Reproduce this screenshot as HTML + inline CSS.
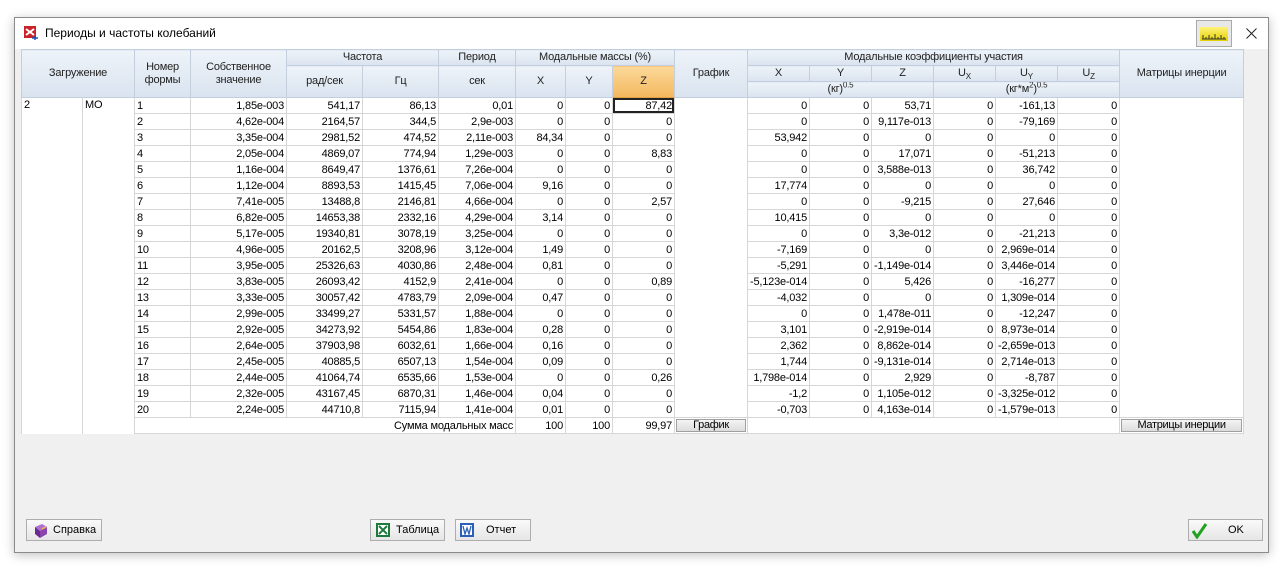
<!DOCTYPE html>
<html><head><meta charset="utf-8"><style>
body{margin:0;width:1287px;height:571px;background:#fff;position:relative;overflow:hidden;font-family:"Liberation Sans",sans-serif;font-size:11px;color:#000}
.win{position:absolute;left:14px;top:17px;width:1253px;height:534px;background:#f0f0f0;border:1px solid #8a8a8a;box-shadow:0 2px 10px rgba(0,0,0,.25)}
.title{position:absolute;left:0;top:0;width:1253px;height:31px;background:#fff}
.title span{position:absolute;left:30px;top:8px;font-size:12px}
table{position:absolute;left:21px;top:49px;width:1222px;border-collapse:collapse;table-layout:fixed;background:#fff}
td,th{padding:0 2px;height:15px;line-height:14px;border:1px solid #d6d6d6;white-space:nowrap;overflow:hidden;text-align:right;font-weight:normal;letter-spacing:-0.2px}
tr{height:16px}
th{background:linear-gradient(#eef3f9,#d9e3ef);border-color:#c3cfdc;text-align:center;color:#222;line-height:13px}
sub,sup{line-height:0;font-size:8px}
th.z{background:linear-gradient(#fbd99a,#f3b85e);border-color:#e0a040}
td.l{text-align:left}
td.n{border-top:none;border-bottom:none}
td.sel{box-shadow:inset 0 0 0 2px #222}
.btn{position:absolute;height:22px;background:linear-gradient(#fafafa,#e6e6e6);border:1px solid #adadad;font-size:11px;line-height:20px;box-sizing:border-box}
.sb{background:linear-gradient(#f4f4f4,#dcdcdc);border:1px solid #a0a0a0;line-height:11px;height:11px;text-align:center;padding:0;letter-spacing:-0.3px}
</style></head><body>
<div class="win">
<div class="title">
<svg style="position:absolute;left:8px;top:7px" width="16" height="16"><rect x="1" y="1" width="12" height="12" fill="#c8222a"/><path d="M3 4l8 6M3 10l8-6" stroke="#fff" stroke-width="2"/><path d="M9 13h6M12 11v4" stroke="#2050b0" stroke-width="1.5"/></svg>
<span>Периоды и частоты колебаний</span>
<div style="position:absolute;left:1181px;top:2px;width:36px;height:27px;background:#e8e8e8;border:1px solid #aaa;box-sizing:border-box"><div style="position:absolute;left:3px;top:6px;width:28px;height:14px;background:linear-gradient(#fff27a,#e2d200)"><svg width="28" height="14"><path d="M2 12h24M3 12v-4M6 12v-2M9 12v-4M12 12v-2M15 12v-5M18 12v-2M21 12v-4M24 12v-2" stroke="#333" stroke-width="1"/></svg></div></div>
<svg style="position:absolute;left:1231px;top:10px" width="11" height="11"><path d="M0.5 0.5l10 10M10.5 0.5l-10 10" stroke="#222"/></svg>
</div>
</div>
<table>
<colgroup><col style="width:61px"><col style="width:52px"><col style="width:56px"><col style="width:96px"><col style="width:76px"><col style="width:76px"><col style="width:77px"><col style="width:50px"><col style="width:47px"><col style="width:62px"><col style="width:73px"><col style="width:62px"><col style="width:62px"><col style="width:62px"><col style="width:62px"><col style="width:62px"><col style="width:62px"><col style="width:124px"></colgroup>
<tr><th colspan="2" rowspan="3">Загружение</th><th rowspan="3">Номер<br>формы</th><th rowspan="3">Собственное<br>значение</th><th colspan="2">Частота</th><th>Период</th><th colspan="3">Модальные массы (%)</th><th rowspan="3">График</th><th colspan="6">Модальные коэффициенты участия</th><th rowspan="3">Матрицы инерции</th></tr>
<tr><th rowspan="2">рад/сек</th><th rowspan="2">Гц</th><th rowspan="2">сек</th><th rowspan="2">X</th><th rowspan="2">Y</th><th rowspan="2" class="z">Z</th><th>X</th><th>Y</th><th>Z</th><th>U<sub>X</sub></th><th>U<sub>Y</sub></th><th>U<sub>Z</sub></th></tr>
<tr><th colspan="3">(кг)<sup>0.5</sup></th><th colspan="3">(кг*м<sup>2</sup>)<sup>0.5</sup></th></tr>
<tr><td class="l n" rowspan="21" style="vertical-align:top">2</td><td class="l n" rowspan="21" style="vertical-align:top">МО</td><td class="l">1</td><td>1,85e-003</td><td>541,17</td><td>86,13</td><td>0,01</td><td>0</td><td>0</td><td class="sel">87,42</td><td class="n" rowspan="20"></td><td>0</td><td>0</td><td>53,71</td><td>0</td><td>-161,13</td><td>0</td><td class="n" rowspan="20"></td></tr>
<tr><td class="l">2</td><td>4,62e-004</td><td>2164,57</td><td>344,5</td><td>2,9e-003</td><td>0</td><td>0</td><td>0</td><td>0</td><td>0</td><td>9,117e-013</td><td>0</td><td>-79,169</td><td>0</td></tr>
<tr><td class="l">3</td><td>3,35e-004</td><td>2981,52</td><td>474,52</td><td>2,11e-003</td><td>84,34</td><td>0</td><td>0</td><td>53,942</td><td>0</td><td>0</td><td>0</td><td>0</td><td>0</td></tr>
<tr><td class="l">4</td><td>2,05e-004</td><td>4869,07</td><td>774,94</td><td>1,29e-003</td><td>0</td><td>0</td><td>8,83</td><td>0</td><td>0</td><td>17,071</td><td>0</td><td>-51,213</td><td>0</td></tr>
<tr><td class="l">5</td><td>1,16e-004</td><td>8649,47</td><td>1376,61</td><td>7,26e-004</td><td>0</td><td>0</td><td>0</td><td>0</td><td>0</td><td>3,588e-013</td><td>0</td><td>36,742</td><td>0</td></tr>
<tr><td class="l">6</td><td>1,12e-004</td><td>8893,53</td><td>1415,45</td><td>7,06e-004</td><td>9,16</td><td>0</td><td>0</td><td>17,774</td><td>0</td><td>0</td><td>0</td><td>0</td><td>0</td></tr>
<tr><td class="l">7</td><td>7,41e-005</td><td>13488,8</td><td>2146,81</td><td>4,66e-004</td><td>0</td><td>0</td><td>2,57</td><td>0</td><td>0</td><td>-9,215</td><td>0</td><td>27,646</td><td>0</td></tr>
<tr><td class="l">8</td><td>6,82e-005</td><td>14653,38</td><td>2332,16</td><td>4,29e-004</td><td>3,14</td><td>0</td><td>0</td><td>10,415</td><td>0</td><td>0</td><td>0</td><td>0</td><td>0</td></tr>
<tr><td class="l">9</td><td>5,17e-005</td><td>19340,81</td><td>3078,19</td><td>3,25e-004</td><td>0</td><td>0</td><td>0</td><td>0</td><td>0</td><td>3,3e-012</td><td>0</td><td>-21,213</td><td>0</td></tr>
<tr><td class="l">10</td><td>4,96e-005</td><td>20162,5</td><td>3208,96</td><td>3,12e-004</td><td>1,49</td><td>0</td><td>0</td><td>-7,169</td><td>0</td><td>0</td><td>0</td><td>2,969e-014</td><td>0</td></tr>
<tr><td class="l">11</td><td>3,95e-005</td><td>25326,63</td><td>4030,86</td><td>2,48e-004</td><td>0,81</td><td>0</td><td>0</td><td>-5,291</td><td>0</td><td>-1,149e-014</td><td>0</td><td>3,446e-014</td><td>0</td></tr>
<tr><td class="l">12</td><td>3,83e-005</td><td>26093,42</td><td>4152,9</td><td>2,41e-004</td><td>0</td><td>0</td><td>0,89</td><td>-5,123e-014</td><td>0</td><td>5,426</td><td>0</td><td>-16,277</td><td>0</td></tr>
<tr><td class="l">13</td><td>3,33e-005</td><td>30057,42</td><td>4783,79</td><td>2,09e-004</td><td>0,47</td><td>0</td><td>0</td><td>-4,032</td><td>0</td><td>0</td><td>0</td><td>1,309e-014</td><td>0</td></tr>
<tr><td class="l">14</td><td>2,99e-005</td><td>33499,27</td><td>5331,57</td><td>1,88e-004</td><td>0</td><td>0</td><td>0</td><td>0</td><td>0</td><td>1,478e-011</td><td>0</td><td>-12,247</td><td>0</td></tr>
<tr><td class="l">15</td><td>2,92e-005</td><td>34273,92</td><td>5454,86</td><td>1,83e-004</td><td>0,28</td><td>0</td><td>0</td><td>3,101</td><td>0</td><td>-2,919e-014</td><td>0</td><td>8,973e-014</td><td>0</td></tr>
<tr><td class="l">16</td><td>2,64e-005</td><td>37903,98</td><td>6032,61</td><td>1,66e-004</td><td>0,16</td><td>0</td><td>0</td><td>2,362</td><td>0</td><td>8,862e-014</td><td>0</td><td>-2,659e-013</td><td>0</td></tr>
<tr><td class="l">17</td><td>2,45e-005</td><td>40885,5</td><td>6507,13</td><td>1,54e-004</td><td>0,09</td><td>0</td><td>0</td><td>1,744</td><td>0</td><td>-9,131e-014</td><td>0</td><td>2,714e-013</td><td>0</td></tr>
<tr><td class="l">18</td><td>2,44e-005</td><td>41064,74</td><td>6535,66</td><td>1,53e-004</td><td>0</td><td>0</td><td>0,26</td><td>1,798e-014</td><td>0</td><td>2,929</td><td>0</td><td>-8,787</td><td>0</td></tr>
<tr><td class="l">19</td><td>2,32e-005</td><td>43167,45</td><td>6870,31</td><td>1,46e-004</td><td>0,04</td><td>0</td><td>0</td><td>-1,2</td><td>0</td><td>1,105e-012</td><td>0</td><td>-3,325e-012</td><td>0</td></tr>
<tr><td class="l">20</td><td>2,24e-005</td><td>44710,8</td><td>7115,94</td><td>1,41e-004</td><td>0,01</td><td>0</td><td>0</td><td>-0,703</td><td>0</td><td>4,163e-014</td><td>0</td><td>-1,579e-013</td><td>0</td></tr>
<tr><td colspan="5" style="border-right:none">Сумма модальных масс</td><td>100</td><td>100</td><td>99,97</td><td style="padding:0 1px"><div class="sb">График</div></td><td colspan="6"></td><td style="padding:0 1px"><div class="sb">Матрицы инерции</div></td></tr>
</table>
<div class="btn" style="left:26px;top:519px;width:76px;padding-left:26px">Справка
<svg style="position:absolute;left:6px;top:3px" width="16" height="16"><path d="M2 4l7-3 5 3-7 4z" fill="#b070d0"/><path d="M2 4v7l5 4V8z" fill="#6a2a90"/><path d="M7 8l7-4v7l-7 4z" fill="#8a44b0"/><path d="M9 6l4-2" stroke="#f0c040" stroke-width="1.5"/></svg></div>
<div class="btn" style="left:370px;top:519px;width:75px;padding-left:25px">Таблица
<svg style="position:absolute;left:4px;top:2px" width="16" height="16"><rect x="1" y="1" width="14" height="14" fill="#1d7a3a"/><rect x="3" y="3" width="10" height="10" fill="#fff"/><path d="M4 4l8 8M12 4l-8 8" stroke="#1d7a3a" stroke-width="2"/></svg></div>
<div class="btn" style="left:455px;top:519px;width:76px;padding-left:30px">Отчет
<svg style="position:absolute;left:3px;top:2px" width="16" height="16"><rect x="1" y="1" width="14" height="14" fill="#2b5fb8"/><rect x="3" y="3" width="10" height="10" fill="#fff"/><path d="M4 4l2 8 2-6 2 6 2-8" stroke="#2b5fb8" stroke-width="1.3" fill="none"/></svg></div>
<div class="btn" style="left:1188px;top:519px;width:75px;padding-left:39px">OK
<svg style="position:absolute;left:3px;top:3px" width="16" height="16"><path d="M1 8l4 6 9-13" stroke="#22a020" stroke-width="3" fill="none"/></svg></div>
</body></html>
